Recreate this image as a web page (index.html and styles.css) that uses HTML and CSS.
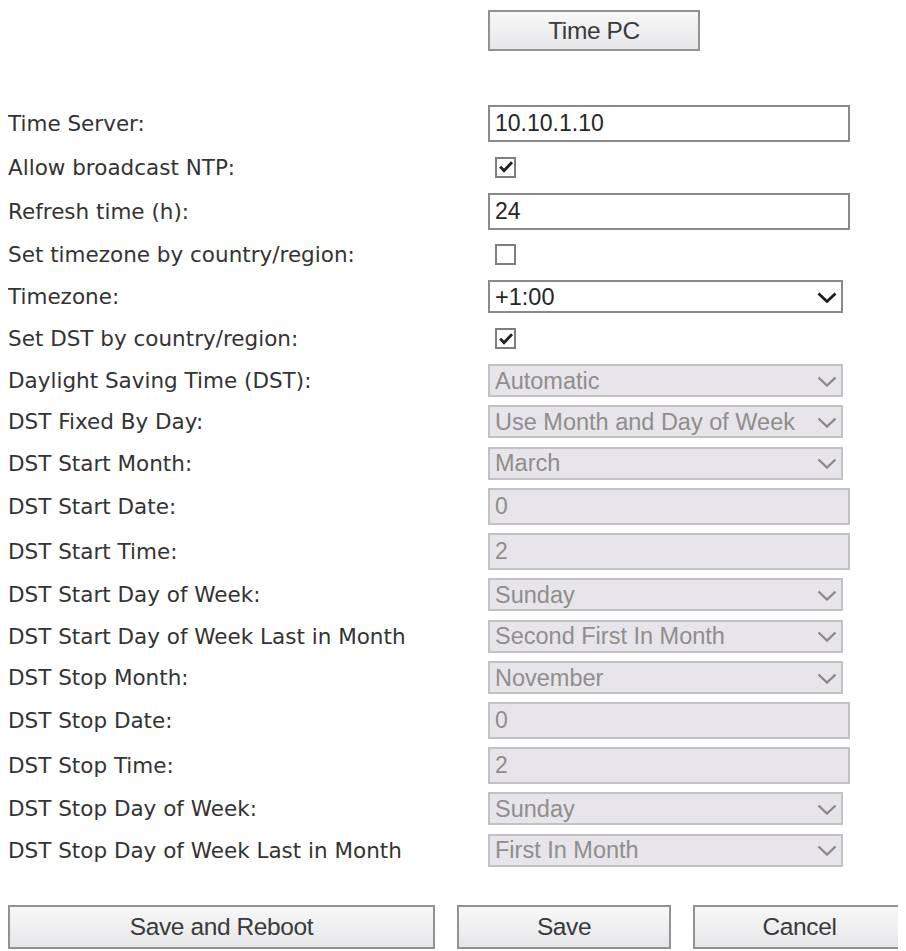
FILE: index.html
```html
<!DOCTYPE html>
<html lang="en">
<head>
<meta charset="utf-8">
<title>Time settings</title>
<link rel="stylesheet" href="styles.css">
</head>
<body>
<div class="page">
  <div class="top">
    <button type="button" class="btn btn-timepc">Time PC</button>
  </div>

  <form class="form">
    <div class="row row-input">
      <label class="lbl">Time Server:</label>
      <div class="ctl"><input class="txt" type="text" value="10.10.1.10"></div>
    </div>
    <div class="row row-check">
      <label class="lbl">Allow broadcast NTP:</label>
      <div class="ctl"><span class="cb" role="checkbox" aria-checked="true"><svg viewBox="0 0 16 16" width="16" height="16"><path d="M2.2 7.6 L6 11.8 L14 3.2" fill="none" stroke="#1e1e1e" stroke-width="2.8" stroke-linejoin="miter"/></svg></span></div>
    </div>
    <div class="row row-input">
      <label class="lbl">Refresh time (h):</label>
      <div class="ctl"><input class="txt" type="text" value="24"></div>
    </div>
    <div class="row row-check">
      <label class="lbl">Set timezone by country/region:</label>
      <div class="ctl"><span class="cb" role="checkbox" aria-checked="false"></span></div>
    </div>
    <div class="row row-select">
      <label class="lbl">Timezone:</label>
      <div class="ctl"><select class="sel"><option>+1:00</option></select><svg class="chev" viewBox="0 0 20 11" width="20" height="11"><path d="M1.5 1.5 L10 9.5 L18.5 1.5" fill="none" stroke="#1e1e1e" stroke-width="2.8"/></svg></div>
    </div>
    <div class="row row-check">
      <label class="lbl">Set DST by country/region:</label>
      <div class="ctl"><span class="cb" role="checkbox" aria-checked="true"><svg viewBox="0 0 16 16" width="16" height="16"><path d="M2.2 7.6 L6 11.8 L14 3.2" fill="none" stroke="#1e1e1e" stroke-width="2.8" stroke-linejoin="miter"/></svg></span></div>
    </div>
    <div class="row row-select">
      <label class="lbl">Daylight Saving Time (DST):</label>
      <div class="ctl"><select class="sel" disabled><option>Automatic</option></select><svg class="chev dis" viewBox="0 0 20 11" width="20" height="11"><path d="M1.5 1.5 L10 9.5 L18.5 1.5" fill="none" stroke-width="2.4"/></svg></div>
    </div>
    <div class="row row-select">
      <label class="lbl">DST Fixed By Day:</label>
      <div class="ctl"><select class="sel" disabled><option>Use Month and Day of Week</option></select><svg class="chev dis" viewBox="0 0 20 11" width="20" height="11"><path d="M1.5 1.5 L10 9.5 L18.5 1.5" fill="none" stroke-width="2.4"/></svg></div>
    </div>
    <div class="row row-select">
      <label class="lbl">DST Start Month:</label>
      <div class="ctl"><select class="sel" disabled><option>March</option></select><svg class="chev dis" viewBox="0 0 20 11" width="20" height="11"><path d="M1.5 1.5 L10 9.5 L18.5 1.5" fill="none" stroke-width="2.4"/></svg></div>
    </div>
    <div class="row row-input">
      <label class="lbl">DST Start Date:</label>
      <div class="ctl"><input class="txt" type="text" value="0" disabled></div>
    </div>
    <div class="row row-input">
      <label class="lbl">DST Start Time:</label>
      <div class="ctl"><input class="txt" type="text" value="2" disabled></div>
    </div>
    <div class="row row-select">
      <label class="lbl">DST Start Day of Week:</label>
      <div class="ctl"><select class="sel" disabled><option>Sunday</option></select><svg class="chev dis" viewBox="0 0 20 11" width="20" height="11"><path d="M1.5 1.5 L10 9.5 L18.5 1.5" fill="none" stroke-width="2.4"/></svg></div>
    </div>
    <div class="row row-select">
      <label class="lbl">DST Start Day of Week Last in Month</label>
      <div class="ctl"><select class="sel" disabled><option>Second First In Month</option></select><svg class="chev dis" viewBox="0 0 20 11" width="20" height="11"><path d="M1.5 1.5 L10 9.5 L18.5 1.5" fill="none" stroke-width="2.4"/></svg></div>
    </div>
    <div class="row row-select">
      <label class="lbl">DST Stop Month:</label>
      <div class="ctl"><select class="sel" disabled><option>November</option></select><svg class="chev dis" viewBox="0 0 20 11" width="20" height="11"><path d="M1.5 1.5 L10 9.5 L18.5 1.5" fill="none" stroke-width="2.4"/></svg></div>
    </div>
    <div class="row row-input">
      <label class="lbl">DST Stop Date:</label>
      <div class="ctl"><input class="txt" type="text" value="0" disabled></div>
    </div>
    <div class="row row-input">
      <label class="lbl">DST Stop Time:</label>
      <div class="ctl"><input class="txt" type="text" value="2" disabled></div>
    </div>
    <div class="row row-select">
      <label class="lbl">DST Stop Day of Week:</label>
      <div class="ctl"><select class="sel" disabled><option>Sunday</option></select><svg class="chev dis" viewBox="0 0 20 11" width="20" height="11"><path d="M1.5 1.5 L10 9.5 L18.5 1.5" fill="none" stroke-width="2.4"/></svg></div>
    </div>
    <div class="row row-select">
      <label class="lbl">DST Stop Day of Week Last in Month</label>
      <div class="ctl"><select class="sel" disabled><option>First In Month</option></select><svg class="chev dis" viewBox="0 0 20 11" width="20" height="11"><path d="M1.5 1.5 L10 9.5 L18.5 1.5" fill="none" stroke-width="2.4"/></svg></div>
    </div>
  </form>

  <div class="actions">
    <button type="button" class="btn btn-reboot">Save and Reboot</button>
    <button type="button" class="btn btn-save">Save</button>
    <button type="button" class="btn btn-cancel">Cancel</button>
  </div>
</div>
</body>
</html>
```

FILE: styles.css
```css
html, body {
  background: #ffffff;
}

body {
  margin: 8px;
  overflow: hidden;
}

.top {
  box-sizing: border-box;
  height: 93px;
  padding: 2px 0 0 480px;
}

.btn {
  box-sizing: border-box;
  margin: 0;
  padding: 0;
  font-family: "Liberation Sans", Arial, sans-serif;
  font-size: 24.5px;
  color: #3a3a3a;
  background: linear-gradient(#f8f8f8, #e7e6e9);
  border: 2px solid #929292;
  border-radius: 0;
  letter-spacing: -0.4px;
}

.btn-timepc {
  width: 212px;
  height: 41px;
}

.form {
  margin: 0;
}

.row {
  display: flex;
  align-items: center;
}

.row-input {
  height: 45px;
}

.row-check {
  height: 42.5px;
}

.row-select {
  height: 41.4px;
}

.lbl {
  flex: none;
  width: 480px;
  font-family: "DejaVu Sans", Verdana, sans-serif;
  font-size: 21.5px;
  color: #333333;
}

.ctl {
  flex: none;
  position: relative;
  width: 362px;
  display: flex;
  align-items: center;
}

.txt {
  box-sizing: border-box;
  width: 362px;
  height: 37px;
  margin: 0;
  padding: 0 0 0 5px;
  border: 2px solid #8a8a8a;
  border-radius: 0;
  background: #ffffff;
  font-family: "Liberation Sans", Arial, sans-serif;
  font-size: 23px;
  color: #262626;
  outline: none;
}

.txt:disabled {
  background: #e7e5e9;
  border-color: #c2c1c4;
  color: #8e8e8e;
  opacity: 1;
  -webkit-text-fill-color: #8e8e8e;
}

.sel {
  box-sizing: border-box;
  width: 355px;
  height: 33px;
  margin: 0;
  padding: 0 0 0 5px;
  appearance: none;
  -webkit-appearance: none;
  border: 2px solid #8a8a8a;
  border-radius: 0;
  background: #ffffff;
  font-family: "Liberation Sans", Arial, sans-serif;
  font-size: 23.5px;
  color: #262626;
  outline: none;
}

.sel:disabled {
  background: #e7e5e9;
  border-color: #c2c1c4;
  color: #8e8e8e;
  opacity: 1;
}

.chev {
  position: absolute;
  left: 329px;
  top: 50%;
  margin-top: -5px;
}

.chev.dis path {
  stroke: #8a8a8a;
}

.cb {
  box-sizing: border-box;
  width: 21px;
  height: 21px;
  margin-left: 7px;
  border: 2px solid #7e7e7e;
  background: #ffffff;
  display: flex;
  align-items: center;
  justify-content: center;
}

.cb svg {
  display: block;
}

.actions {
  display: flex;
  gap: 22px;
  margin-top: 34px;
  width: 906px;
}

.actions .btn {
  flex: none;
  height: 44px;
}

.btn-reboot {
  width: 427px;
}

.btn-save {
  width: 214px;
}

.btn-cancel {
  width: 213px;
}
```
